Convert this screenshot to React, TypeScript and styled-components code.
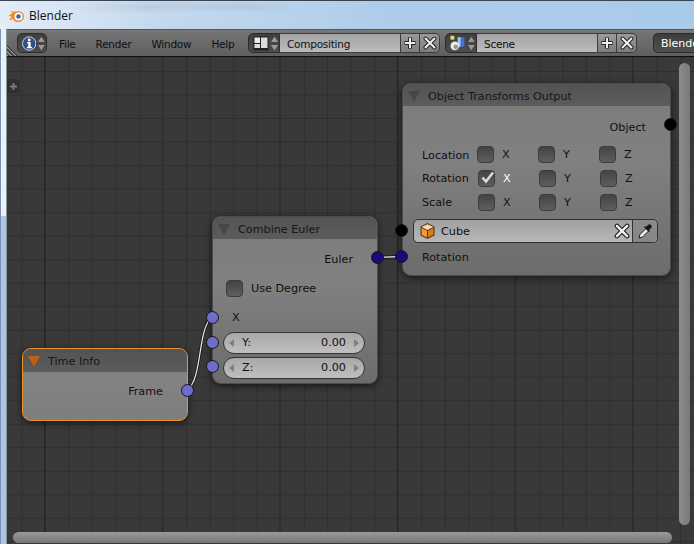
import React from "react";
import styled, { createGlobalStyle } from "styled-components";

const Global = createGlobalStyle`
  html, body { margin: 0; padding: 0; width: 694px; height: 544px; overflow: hidden; background: #b4d0ec; }
  #root { width: 694px; height: 544px; }
  * { box-sizing: border-box; }
`;

const Win = styled.div`
  width: 694px; height: 544px; overflow: hidden;
  display: grid; grid-template-rows: 29px 28px 487px;
  font-family: "DejaVu Sans", sans-serif; font-size: 11.2px; color: #101010;
  background-color: #a8c8ea;
  background-image:
    linear-gradient(90deg, #7d93ab 0 1px, transparent 1px 6px, #8b9299 6px 7px),
    linear-gradient(#e9f1fa 0 216px, #a8c8ea 216px);
  background-size: 7px 100%, 7px 100%;
  background-repeat: no-repeat;
`;
const TitleBar = styled.div`
  display: flex; align-items: center; gap: 4px; padding: 0 0 0 8px;
  font-family: "Open Sans", "Liberation Sans", sans-serif; font-size: 12px; color: #111;
  border-top: 1px solid #3a4450;
  background:
    radial-gradient(ellipse 90px 7px at 150px 6px, rgba(120,130,145,.16), transparent),
    radial-gradient(ellipse 60px 6px at 240px 6px, rgba(110,120,135,.14), transparent),
    radial-gradient(ellipse 120px 10px at 230px 24px, rgba(190,210,230,.5), transparent),
    linear-gradient(90deg, #e3ecf7 0, #c6daef 22%, #aecdea 55%, #a9cbea 100%);
`;
const Main = styled.div`
  display: contents;
`;
const Header = styled.div`
  margin-left: 7px; position: relative; display: flex; align-items: center; padding: 0 0 0 10px;
  height: 28px; font-size: 10.5px; letter-spacing: -0.25px;
  background: linear-gradient(#7d7d7d 0, #747474 2px, #5f5f5f 100%);
  border-top: 1px solid #50565c; border-bottom: 1px solid #0f0f0f;
`;
const Hatch = styled.div`
  position: absolute; left: 0; bottom: 0; width: 11px; height: 11px;
  background: repeating-linear-gradient(45deg, #9a9a9a 0 1px, #3e3e3e 1px 2px, #6a6a6a 2px 3px);
  clip-path: polygon(0 0, 100% 100%, 0 100%);
`;
const Selector = styled.div<{ $w: number }>`
  width: ${p => p.$w}px; height: 20px; flex: none; display: flex; align-items: center; gap: 1px;
  padding-left: 4px; border: 1px solid #2b2b2b; border-radius: 5px 0 0 5px;
  background: linear-gradient(#3f3f3f, #4c4c4c);
`;
const SoloSelector = styled(Selector)`border-radius: 5px;`;
const Menu = styled.nav`
  display: flex; gap: 20px; margin: 2px 12px 0 12px; color: #0e0e0e; width: 177px; flex: none;
`;
const Field = styled.div<{ $w: number }>`
  width: ${p => p.$w}px; height: 20px; flex: none; display: flex; align-items: center; padding: 2px 0 0 7px;
  border-top: 1px solid #3b3b3b; border-bottom: 1px solid #3b3b3b;
  background: linear-gradient(#a3a3a3, #bcbcbc);
`;
const SquareBtn = styled.div<{ $last?: boolean }>`
  width: 20px; height: 20px; flex: none; display: flex; align-items: center; justify-content: center;
  border: 1px solid #3b3b3b; border-left-width: ${p => (p.$last ? 0 : 1)}px;
  border-radius: ${p => (p.$last ? "0 5px 5px 0" : "0")};
  background: linear-gradient(#9a9a9a, #7d7d7d);
`;
const Spacer = styled.div<{ $w: number }>`width: ${p => p.$w}px; flex: none;`;
const HeaderButton = styled.div`
  height: 20px; width: 41px; flex: none; padding: 1px 0 0 7px; display: flex; align-items: center;
  color: #fff; border: 1px solid #2b2b2b; border-right: 0; border-radius: 5px 0 0 5px; overflow: hidden;
  background: linear-gradient(#3d3d3d, #505050); white-space: nowrap; font-size: 11px; letter-spacing: 0;
`;

const Canvas = styled.div`
  position: relative; margin-left: 7px; overflow: hidden;
  background-color: #393939;
  background-image:
    linear-gradient(90deg, #252525 1px, transparent 1px),
    linear-gradient(90deg, #2a2a2a 1px, transparent 1px),
    linear-gradient(90deg, #2f2f2f 1px, transparent 1px),
    linear-gradient(#2f2f2f 1px, transparent 1px);
  background-size: 353px 100%, 117.65px 100%, 23.53px 100%, 100% 23.53px;
  background-position: 37px 0, 37px 0, 14.5px 0, 0 14px;
`;
const PlusTab = styled.div`
  position: absolute; left: 0; top: 22px; width: 13px; height: 14px; border-radius: 0 4px 4px 0;
  background: #2f2f2f; display: flex; align-items: center; justify-content: center;
`;
const Wires = styled.svg`position: absolute; left: 0; top: 0; z-index: 1;`;

const Node = styled.section<{ $x: number; $y: number; $w: number; $h: number; $sel?: boolean }>`
  position: absolute; left: ${p => p.$x}px; top: ${p => p.$y}px; width: ${p => p.$w}px; height: ${p => p.$h}px;
  z-index: 2; border-radius: 9px;
  border: 1px solid ${p => (p.$sel ? "#e8932c" : "#4c4c4c")};
  background: ${p => (p.$sel ? "linear-gradient(#858585, #7e7e7e)" : "linear-gradient(#7c7c7c 0, #808080 40%, #6c6c6c 100%)")};
  box-shadow: 0 2px 7px rgba(0,0,0,.6);
`;
const NodeTitle = styled.header<{ $h: number }>`
  height: ${p => p.$h}px; display: flex; align-items: center; gap: 8px; padding: 2px 0 0 5px;
  border-radius: 8px 8px 0 0; color: #161616;
  background: linear-gradient(#535353, #5c5c5c);
`;
const Tri = styled.span<{ $sel?: boolean }>`
  width: 0; height: 0; flex: none;
  border-left: 6px solid transparent; border-right: 6px solid transparent;
  border-top: 11px solid ${p => (p.$sel ? "#c65c14" : "#474747")};
`;
const NodeBody = styled.div<{ $top: number }>`
  display: flex; flex-direction: column; padding-top: ${p => p.$top}px;
`;
const OutRow = styled.div<{ $right: number }>`
  height: 20px; display: flex; align-items: center; justify-content: flex-end; padding-right: ${p => p.$right}px;
`;
const InRow = styled.div<{ $left: number; $mt?: number }>`
  height: 20px; display: flex; align-items: center; gap: 8px; padding-left: ${p => p.$left}px;
  margin-top: ${p => p.$mt ?? 0}px;
`;
const CheckGrid = styled.div`margin-top: 5px; display: flex; flex-direction: column;`;
const CheckRow = styled.div<{ $shift?: number }>`
  height: 24px; display: grid; grid-template-columns: ${p => 55 + (p.$shift ?? 0)}px 61px 61px 61px;
  align-items: center; padding-left: 19px;
`;
const RowLabel = styled.span<{ $dy?: number }>`margin-top: ${p => p.$dy ?? 0}px;`;
const CheckCell = styled.div<{ $on?: boolean }>`
  display: flex; align-items: center; gap: 8px; color: ${p => (p.$on ? "#fff" : "#111")};
`;
const Box = styled.div`
  width: 17px; height: 17px; flex: none; border-radius: 4px; position: relative;
  border: 1px solid #3c3c3c;
  background: linear-gradient(#444, #5e5e5e);
`;
const Tick = styled.svg`position: absolute; left: 1px; top: -1px;`;
const ObjectField = styled.div`
  margin: 5px 0 0 10px; width: 245px; height: 24px; display: flex; align-items: stretch;
  border: 1px solid #333; border-radius: 5px;
  background: linear-gradient(#a0a0a0, #b8b8b8);
`;
const ObjectName = styled.div`
  flex: 1; display: flex; align-items: center; gap: 5px; padding: 0 2px 0 5px;
`;
const Grow = styled.span`flex: 1;`;
const Dropper = styled.div`
  width: 25px; flex: none; display: flex; align-items: center; justify-content: center;
  border-left: 1px solid #333; border-radius: 0 5px 5px 0; background: linear-gradient(#8a8a8a, #868686);
`;
const NumField = styled.div<{ $mt: number }>`
  margin: ${p => p.$mt}px 0 0 10px; width: 142px; height: 22px; display: flex; align-items: center;
  padding: 0 5px 1px; border: 1px solid #333; border-radius: 11px; color: #111;
  background: linear-gradient(#a8a8a8, #bfbfbf);
`;
const NumLabel = styled.span`margin-left: 8px;`;
const NumValue = styled.span`margin-left: auto; margin-right: 8px;`;
const Arrow = styled.span<{ $r?: boolean }>`
  width: 0; height: 0; flex: none; border-top: 4px solid transparent; border-bottom: 4px solid transparent;
  ${p => (p.$r ? "border-left: 5px solid #808080;" : "border-right: 5px solid #808080;")}
`;
const Socket = styled.span<{ $x: number; $y: number; $c: string }>`
  position: absolute; z-index: 3; left: ${p => p.$x - 6}px; top: ${p => p.$y - 6}px; width: 13px; height: 13px;
  border-radius: 50%; background: ${p => p.$c}; border: 1px solid #151515;
`;
const HScroll = styled.div`
  position: absolute; z-index: 4; left: 6px; top: 475px; width: 659px; height: 11px; border-radius: 6px;
  background: linear-gradient(#9a9a9a, #767676);
`;
const VScroll = styled.div`
  position: absolute; z-index: 4; left: 672px; top: 6px; width: 11px; height: 462px; border-radius: 6px;
  background: linear-gradient(90deg, #8c8c8c, #7a7a7a);
`;

const Stepper = () => (
  <svg width="9" height="15" viewBox="0 0 9 15">
    <path d="M4.5 0.5 8 6H1z" fill="#9a9a9a" />
    <path d="M4.5 14.5 8 9H1z" fill="#9a9a9a" />
  </svg>
);
const Logo = () => (
  <svg width="17" height="15" viewBox="0 0 17 15">
    <path d="M0.5 7.5 5 5 2 3.5h6.5C12.5 2.500 16 5 16 8.500 16 12 13 14 10 14 7 14 5.500 12.500 5 10.500L2.500 12.500 1.500 11 4 9z" fill="#ef8a2a" />
    <circle cx="10.500" cy="8.500" r="4" fill="#fff" />
    <circle cx="10.500" cy="8.500" r="2.300" fill="#2d6cb0" />
  </svg>
);
const Info = () => (
  <svg width="15" height="15" viewBox="0 0 15 15">
    <circle cx="7.500" cy="7.500" r="7" fill="#30508a" stroke="#cfd8e6" />
    <circle cx="7.500" cy="3.900" r="1.500" fill="#fff" />
    <path d="M5.500 6h3.500v5h1.300v1.500H5.200V11h1.300V7.500h-1z" fill="#fff" />
  </svg>
);
const Layout = () => (
  <svg width="16" height="15" viewBox="0 0 16 15">
    <rect x="0.500" y="0.500" width="15" height="14" fill="#222" />
    <rect x="1.500" y="1.500" width="5.500" height="5.500" fill="#eee" />
    <rect x="1.500" y="8" width="5.500" height="4" fill="#ddd" />
    <rect x="8" y="1.500" width="6.500" height="10.500" fill="#dcdcdc" />
  </svg>
);
const SceneIcon = () => (
  <svg width="17" height="16" viewBox="0 0 17 16">
    <rect x="0.500" y="0.500" width="4" height="4" fill="#e4e060" />
    <rect x="8" y="2" width="7" height="10" rx="1" fill="#3f74d0" />
    <rect x="8" y="2" width="3" height="10" fill="#a8c4f0" />
    <circle cx="5" cy="11" r="4.500" fill="#eee" />
    <circle cx="6" cy="12" r="2.500" fill="#999" />
  </svg>
);
const Plus = () => (
  <svg width="14" height="14" viewBox="0 0 14 14">
    <path d="M7 1.500v11M1.500 7h11" stroke="#222" strokeWidth="4" />
    <path d="M7 2v10M2 7h10" stroke="#eee" strokeWidth="2" />
  </svg>
);
const Cross = ({ size = 14 }: { size?: number }) => (
  <svg width={size} height={size} viewBox="0 0 14 14">
    <path d="M2.500 2.500l9 9M11.500 2.500l-9 9" stroke="#222" strokeWidth="4" strokeLinecap="round" />
    <path d="M2.500 2.500l9 9M11.500 2.500l-9 9" stroke="#f2f2f2" strokeWidth="2" strokeLinecap="round" />
  </svg>
);
const CubeIcon = () => (
  <svg width="17" height="18" viewBox="0 0 17 18">
    <path d="M8.500 1 15.500 4.500v9L8.500 17 1.500 13.500v-9z" fill="#5c3a18" />
    <path d="M8.500 2.200 14.400 5 8.500 8 2.600 5z" fill="#fbd9a8" />
    <path d="M2.600 6 8 8.800v6.700L2.600 12.800z" fill="#f29a3a" />
    <path d="M9 8.800 14.400 6v6.800L9 15.500z" fill="#d67a20" />
  </svg>
);
const Eyedropper = () => (
  <svg width="17" height="17" viewBox="0 0 17 17">
    <path d="M2 15l1-3.500 6-6 2.500 2.500-6 6z" fill="#eee" stroke="#222" />
    <path d="M9 4l2-2c1-1 2-1 3 0s1 2 0 3l-2 2 1 1-1 1-5-5 1-1z" fill="#151515" />
  </svg>
);

const offX = 7, offY = 57;
const S = (x: number, y: number, c: string) => <Socket $x={x - offX} $y={y - offY} $c={c} />;

export default function App() {
  return (
    <Win>
      <Global />
      <TitleBar><Logo /><span>Blender</span></TitleBar>
      <Main>
        <Header>
          <Hatch />
          <SoloSelector $w={30}><Info /><Stepper /></SoloSelector>
          <Menu><span>File</span><span>Render</span><span>Window</span><span>Help</span></Menu>
          <Selector $w={32}><Layout /><Stepper /></Selector>
          <Field $w={120}>Compositing</Field>
          <SquareBtn><Plus /></SquareBtn>
          <SquareBtn $last><Cross /></SquareBtn>
          <Spacer $w={5} />
          <Selector $w={32}><SceneIcon /><Stepper /></Selector>
          <Field $w={120}>Scene</Field>
          <SquareBtn><Plus /></SquareBtn>
          <SquareBtn $last><Cross /></SquareBtn>
          <Spacer $w={16} />
          <HeaderButton>Blender</HeaderButton>
        </Header>
        <Canvas>
          <PlusTab>
            <svg width="9" height="9" viewBox="0 0 9 9"><path d="M4.500 1v7M1 4.500h7" stroke="#777" strokeWidth="2" /></svg>
          </PlusTab>
          <Wires width="687" height="487" viewBox="0 0 687 487">
            <path d="M180 333C196 322 190 272 205 260" fill="none" stroke="#1c1c1c" strokeWidth="3" />
            <path d="M180 333C196 322 190 272 205 260" fill="none" stroke="#e8e8e8" strokeWidth="1.200" />
            <path d="M370 200.500L394 199.500" fill="none" stroke="#1c1c1c" strokeWidth="3.500" />
            <path d="M370 200.500L394 199.500" fill="none" stroke="#d0d0d0" strokeWidth="1.500" />
          </Wires>

          <Node $x={395} $y={26} $w={269} $h={193}>
            <NodeTitle $h={22}><Tri /><span>Object Transforms Output</span></NodeTitle>
            <NodeBody $top={11}>
              <OutRow $right={24}>Object</OutRow>
              <CheckGrid>
                <CheckRow>
                  <RowLabel $dy={2}>Location</RowLabel>
                  <CheckCell><Box />X</CheckCell>
                  <CheckCell><Box />Y</CheckCell>
                  <CheckCell><Box />Z</CheckCell>
                </CheckRow>
                <CheckRow $shift={1}>
                  <RowLabel>Rotation</RowLabel>
                  <CheckCell $on>
                    <Box>
                      <Tick width="16" height="15" viewBox="0 0 16 15">
                        <path d="M2.500 7.500l3.500 4 7-9" fill="none" stroke="#dcdcdc" strokeWidth="2.500" />
                      </Tick>
                    </Box>X
                  </CheckCell>
                  <CheckCell><Box />Y</CheckCell>
                  <CheckCell><Box />Z</CheckCell>
                </CheckRow>
                <CheckRow $shift={1}>
                  <RowLabel>Scale</RowLabel>
                  <CheckCell><Box />X</CheckCell>
                  <CheckCell><Box />Y</CheckCell>
                  <CheckCell><Box />Z</CheckCell>
                </CheckRow>
              </CheckGrid>
              <ObjectField>
                <ObjectName><CubeIcon /><span>Cube</span><Grow /><Cross size={16} /></ObjectName>
                <Dropper><Eyedropper /></Dropper>
              </ObjectField>
              <InRow $left={19} $mt={4}>Rotation</InRow>
            </NodeBody>
          </Node>

          <Node $x={205} $y={159} $w={166} $h={168}>
            <NodeTitle $h={22}><Tri /><span>Combine Euler</span></NodeTitle>
            <NodeBody $top={10}>
              <OutRow $right={24}>Euler</OutRow>
              <InRow $left={13} $mt={9}><Box />Use Degree</InRow>
              <InRow $left={19} $mt={9}>X</InRow>
              <NumField $mt={5}><Arrow /><NumLabel>Y:</NumLabel><NumValue>0.00</NumValue><Arrow $r /></NumField>
              <NumField $mt={3}><Arrow /><NumLabel>Z:</NumLabel><NumValue>0.00</NumValue><Arrow $r /></NumField>
            </NodeBody>
          </Node>

          <Node $x={15} $y={291} $w={166} $h={73} $sel>
            <NodeTitle $h={23}><Tri $sel /><span>Time Info</span></NodeTitle>
            <NodeBody $top={9}>
              <OutRow $right={24}>Frame</OutRow>
            </NodeBody>
          </Node>

          {S(670, 124, "#000")}
          {S(401, 230, "#000")}
          {S(401, 256, "#1c0a78")}
          {S(377, 257, "#1c0a78")}
          {S(212, 317, "#6e6ec8")}
          {S(212, 342, "#6e6ec8")}
          {S(212, 366, "#6e6ec8")}
          {S(187, 390, "#6e6ec8")}

          <HScroll />
          <VScroll />
        </Canvas>
      </Main>
    </Win>
  );
}
